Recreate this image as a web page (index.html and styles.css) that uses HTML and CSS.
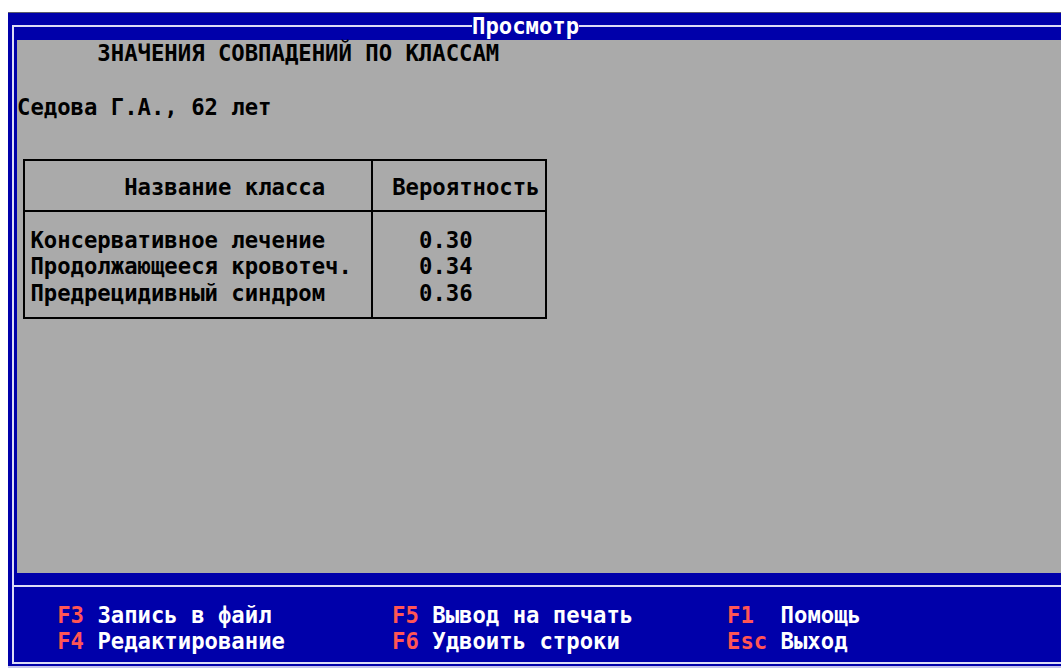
FILE: index.html
```html
<!DOCTYPE html>
<html lang="ru">
<head>
<meta charset="utf-8">
<title>Просмотр</title>
<link rel="stylesheet" href="styles.css">
</head>
<body>
<div class="screen">
  <div class="titlebar">
    <span class="rule rule-left"></span>
    <span class="title">Просмотр</span>
    <span class="rule rule-right"></span>
  </div>
  <div class="frame">
    <div class="view">
      <p class="line caption">ЗНАЧЕНИЯ СОВПАДЕНИЙ ПО КЛАССАМ</p>
      <p class="line"> </p>
      <p class="line">Седова Г.А., 62 лет</p>
      <div class="grid">
        <div class="cell head name">Название класса</div>
        <div class="cell head prob">Вероятность</div>
        <div class="cell body name">Консервативное лечение
Продолжающееся кровотеч.
Предрецидивный синдром</div>
        <div class="cell body prob val">0.30
0.34
0.36</div>
      </div>
    </div>
    <div class="gap"></div>
    <div class="status">
      <p class="line">   <span class="key">F3</span> Запись в файл         <span class="key">F5</span> Вывод на печать       <span class="key">F1</span>  Помощь</p>
      <p class="line">   <span class="key">F4</span> Редактирование        <span class="key">F6</span> Удвоить строки        <span class="key">Esc</span> Выход</p>
    </div>
  </div>
</div>
</body>
</html>
```
FILE: styles.css
```css
html, body {
  margin: 0;
  padding: 0;
  background: #ffffff;
  overflow: hidden;
}

body {
  width: 1061px;
  height: 668px;
  font: bold 22.26px/26.8px "DejaVu Sans Mono", "Liberation Mono", monospace;
}

p {
  margin: 0;
}

.screen {
  margin: 12px 0 0 8px;
  height: 653px;
  background: #0000aa;
  border-top: 1px solid #5c5c6c;
  border-bottom: 2px solid #c4c4ec;
  display: flex;
  flex-direction: column;
}

/* window header: rule — caption — rule */
.titlebar {
  height: 27px;
  display: flex;
  align-items: flex-start;
  flex: none;
}

.rule {
  height: 15px;
  align-self: flex-end;
  border-top: 2px solid #dcdcf6;
  box-sizing: border-box;
}

.rule-left {
  margin-left: 4px;
  width: 460px;
  border-left: 2px solid #dcdcf6;
}

.rule-right {
  flex: 1;
}

.title {
  color: #ffffff;
  line-height: 26.8px;
  white-space: pre;
}

/* window body with left frame line */
.frame {
  margin-left: 4px;
  border-left: 2px solid #dcdcf6;
  display: flex;
  flex-direction: column;
  flex: none;
}

.view {
  margin-left: 3px;
  height: 533px;
  background: #aaaaaa;
  color: #000000;
}

.line {
  white-space: pre;
  height: 26.8px;
}

.caption {
  padding-left: 6ch;
}

/* result table drawn with box lines */
.grid {
  display: grid;
  grid-template-columns: 348px 172px;
  width: max-content;
  margin: 38.6px 0 0 6px;
  border: 2px solid #000000;
}

.cell {
  white-space: pre;
  line-height: 26.8px;
}

.cell.name {
  border-right: 2px solid #000000;
}

.cell.head {
  padding-top: 13px;
  padding-bottom: 9.2px;
  border-bottom: 2px solid #000000;
}

.cell.body {
  padding-top: 14.6px;
  padding-bottom: 10px;
}

.head.name {
  padding-left: 99.2px;
}

.head.prob {
  padding-left: 19.2px;
}

.body.name {
  padding-left: 5.4px;
}

.body.val {
  padding-left: 46px;
}

.gap {
  height: 12px;
}

/* function key hints */
.status {
  height: 79px;
  box-sizing: border-box;
  border-top: 2px solid #dcdcf6;
  border-bottom: 2px solid #dcdcf6;
  padding: 14.6px 0 0 3px;
  color: #ffffff;
}

.key {
  color: #ff5555;
}
```
